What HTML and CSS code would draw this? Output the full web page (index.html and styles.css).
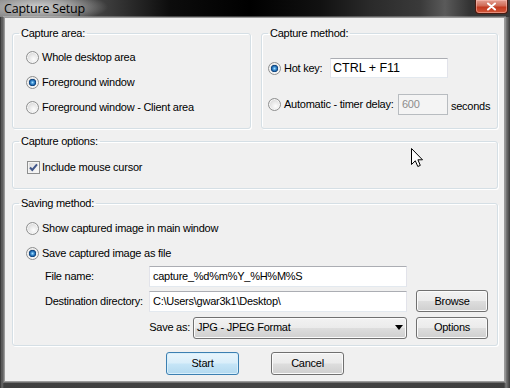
FILE: index.html
```html
<!DOCTYPE html>
<html>
<head>
<meta charset="utf-8">
<title>Capture Setup</title>
<link rel="stylesheet" href="styles.css">
</head>
<body>
<div class="window">
  <div class="titlebar">
    <span class="title">Capture Setup</span>
    <span class="close"><svg width="11" height="9" viewBox="0 0 11 9"><path d="M2 1.5 L9 7.5 M9 1.5 L2 7.5" stroke="#fff" stroke-width="2" stroke-linecap="round"/></svg></span>
  </div>
  <div class="client">
    <div class="top">
      <fieldset class="group area">
        <legend>Capture area:</legend>
        <div class="opt"><span class="radio"></span>Whole desktop area</div>
        <div class="opt"><span class="radio on"></span>Foreground window</div>
        <div class="opt"><span class="radio"></span>Foreground window - Client area</div>
      </fieldset>
      <fieldset class="group method">
        <legend>Capture method:</legend>
        <div class="opt hot"><span class="radio on"></span><span class="lbl-hot">Hot key:</span><span class="field hotkey">CTRL + F11</span></div>
        <div class="opt auto"><span class="radio"></span><span class="lbl-auto">Automatic - timer delay:</span><span class="field disabled">600</span><span class="unit">seconds</span></div>
      </fieldset>
    </div>
    <fieldset class="group options">
      <legend>Capture options:</legend>
      <div class="opt"><span class="check"><svg width="11" height="11" viewBox="0 0 11 11"><path d="M2 5.5 L4.3 8 L9 2.3" fill="none" stroke="#40568a" stroke-width="2"/></svg></span>Include mouse cursor</div>
    </fieldset>
    <fieldset class="group saving">
      <legend>Saving method:</legend>
      <div class="opt"><span class="radio"></span>Show captured image in main window</div>
      <div class="opt"><span class="radio on"></span>Save captured image as file</div>
      <div class="form">
        <span class="lbl">File name:</span>
        <span class="field wide">capture_%d%m%Y_%H%M%S</span>
        <span></span>
        <span class="lbl">Destination directory:</span>
        <span class="field wide">C:\Users\gwar3k1\Desktop\</span>
        <span class="btn small">Browse</span>
        <div class="saveas"><span>Save as:</span><span class="combo"><span>JPG - JPEG Format</span><span class="arrow"></span></span></div>
        <span class="btn small">Options</span>
      </div>
    </fieldset>
    <div class="buttons">
      <span class="btn default">Start</span>
      <span class="btn">Cancel</span>
    </div>
  </div>
  <svg class="cursor" width="13" height="20" viewBox="0 0 13 20"><path d="M0.5 0.5 V16.5 L4.3 12.8 L6.8 18.5 L9.3 17.4 L6.9 11.8 H11.5 Z" fill="#fff" stroke="#000" stroke-width="1" stroke-linejoin="miter"/></svg>
</div>
</body>
</html>
```
FILE: styles.css
```css
* { box-sizing: border-box; }
html, body { margin: 0; padding: 0; background: #000; }
body {
  font-family: "Liberation Sans", Arial, sans-serif;
  font-size: 11px;
  line-height: 13px;
  letter-spacing: -0.25px;
  color: #000;
}
.window {
  position: relative;
  width: 510px;
  height: 388px;
  display: flex;
  flex-direction: column;
  overflow: hidden;
  background: linear-gradient(to right, #2c2c2c 0, #6a6a6a 2px, #3e3e3e 4px, #444 50%, #3e3e3e 504px, #7a7a7a 506px, #3a3a3a 510px);
}
.titlebar {
  height: 17px;
  flex: none;
  display: flex;
  justify-content: space-between;
  align-items: flex-start;
  background:
    radial-gradient(ellipse 70px 16px at 38px 7px, rgba(205,205,205,1) 0, rgba(175,175,175,.85) 45%, rgba(90,90,90,0) 100%),
    linear-gradient(to right, #777 0, #3a3a3a 110px, #0c0c0c 170px, #000 250px, #111 320px, #2a2a2a 370px, #3a3a3a 420px, #5a5a5a 445px, #333 470px, #3a3a3a 510px);
}
.title {
  font-family: "Open Sans", "Noto Sans", sans-serif;
  font-size: 12.5px;
  line-height: 17px;
  padding-left: 4px;
  color: #000;
  letter-spacing: -0.2px;
}
.close {
  width: 33px;
  height: 14px;
  margin-right: 2px;
  border: 1px solid #4a1a10;
  border-top: none;
  border-radius: 0 0 4px 4px;
  background: linear-gradient(#e3a093 0, #cf6a55 45%, #c2391f 55%, #d2583a 100%);
  box-shadow: inset 0 0 0 1px rgba(255,200,190,.5);
  display: flex;
  align-items: center;
  justify-content: center;
}
.client {
  flex: 1;
  margin: 0 5px 6px 4px;
  background: #f0f0f0;
  border: 1px solid #9a9a9a;
  box-shadow: 0 0 0 1px rgba(255,255,255,.25);
  padding: 9px 6px 0 7px;
  display: flex;
  flex-direction: column;
}
.top {
  display: grid;
  grid-template-columns: 239px 237px;
  column-gap: 10px;
}
.group {
  --pl: 0px;
  margin: 0;
  min-width: 0;
  border: 1px solid #d5dfe5;
  border-radius: 3px;
  box-shadow: inset 1px 1px 0 #fff, 1px 1px 0 #fff;
  padding: 0 0 0 var(--pl);
}
.group legend {
  padding: 0 2px;
  margin-left: calc(6px - var(--pl));
  line-height: 13px;
}
.opt {
  display: flex;
  align-items: center;
  height: 13px;
  white-space: nowrap;
}
.area { --pl: 13px; padding-top: 11px; padding-bottom: 14px; }
.area .opt + .opt { margin-top: 12px; }
.method { --pl: 6px; padding-top: 18px; }
.method .hot { height: 20px; }
.method .auto { height: 21px; margin-top: 16px; }
.lbl-hot { width: 46px; }
.lbl-auto { width: 114px; }
.unit { margin-left: 3px; padding-top: 4px; }
.radio {
  width: 13px;
  height: 13px;
  flex: none;
  margin-right: 3px;
  border-radius: 50%;
  border: 1px solid #8e8f8f;
  background: radial-gradient(circle at 60% 65%, #fdfdfd 0, #eaeaea 40%, #c9c9c9 100%);
  box-shadow: inset 0 0 0 1px #f6f6f6;
}
.radio.on {
  background:
    radial-gradient(circle at 50% 50%, #a6e2ff 0, #3f8fd2 1.6px, #175b9e 2.8px, #0b3a70 3.4px, rgba(11,58,112,0) 4px),
    radial-gradient(circle at 60% 65%, #fdfdfd 0, #eaeaea 40%, #c9c9c9 100%);
}
.options { --pl: 14px; margin-top: 6px; padding-top: 13px; padding-bottom: 14px; }
.check {
  width: 13px;
  height: 13px;
  flex: none;
  margin-right: 2px;
  border: 1px solid #8e8f8f;
  background: linear-gradient(135deg, #d7d7d7 0, #f0f0f0 60%, #fbfbfb 100%);
  box-shadow: inset 0 0 0 1px #f4f4f4;
  display: flex;
  align-items: center;
  justify-content: center;
}
.saving { --pl: 13px; margin-top: 8px; padding-top: 12px; padding-bottom: 8px; }
.saving .opt + .opt { margin-top: 12px; }
.form {
  margin: 6px 0 0 19px;
  display: grid;
  grid-template-columns: 104px 258px 72px;
  grid-template-rows: 21px 22px 22px;
  column-gap: 0;
  row-gap: 3px;
  align-items: center;
}
.form .btn.small { margin-left: 9px; }
.form > :nth-child(n+7) { margin-top: 3px; }
.lbl { white-space: nowrap; }
.field {
  display: flex;
  align-items: center;
  height: 20px;
  padding: 0 3px;
  background: #fff;
  border: 1px solid;
  border-color: #abadb3 #e2e3ea #e3e9ef #e2e3ea;
  white-space: nowrap;
}
.field.wide { height: 21px; width: 258px; }
.hotkey { width: 118px; font-size: 12.5px; padding-left: 2px; letter-spacing: 0; }
.field.disabled {
  width: 50px;
  height: 21px;
  background: #f4f4f4;
  color: #8d8d8d;
  border-color: #b8bcc0;
}
.saveas {
  grid-column: 1 / 3;
  display: flex;
  justify-content: flex-end;
  align-items: center;
  gap: 3px;
}
.combo {
  width: 214px;
  height: 22px;
  display: flex;
  align-items: center;
  justify-content: space-between;
  padding: 0 2px 0 3px;
  border: 1px solid #707070;
  border-radius: 3px;
  background: linear-gradient(#f2f2f2 0, #ebebeb 48%, #dddddd 52%, #cfcfcf 100%);
  box-shadow: inset 0 0 0 1px #fbfbfb;
}
.arrow {
  width: 0;
  height: 0;
  border-left: 4px solid transparent;
  border-right: 4px solid transparent;
  border-top: 5px solid #000;
  margin-right: 1px;
}
.btn {
  width: 73px;
  height: 23px;
  display: flex;
  align-items: center;
  justify-content: center;
  border: 1px solid #707070;
  border-radius: 3px;
  background: linear-gradient(#f2f2f2 0, #ebebeb 48%, #dddddd 52%, #cfcfcf 100%);
  box-shadow: inset 0 0 0 1px #fbfbfb;
}
.btn.small { width: 72px; height: 22px; }
.btn.default {
  border-color: #3c7fb1;
  background: linear-gradient(#e9f5fc 0, #d9eefa 48%, #c6e5f7 52%, #b3d9ef 100%);
  box-shadow: inset 0 0 0 1px #d8effb;
}
.buttons {
  margin-top: 6px;
  display: flex;
  justify-content: center;
  gap: 32px;
}
.cursor {
  position: absolute;
  left: 411px;
  top: 148px;
}
```
